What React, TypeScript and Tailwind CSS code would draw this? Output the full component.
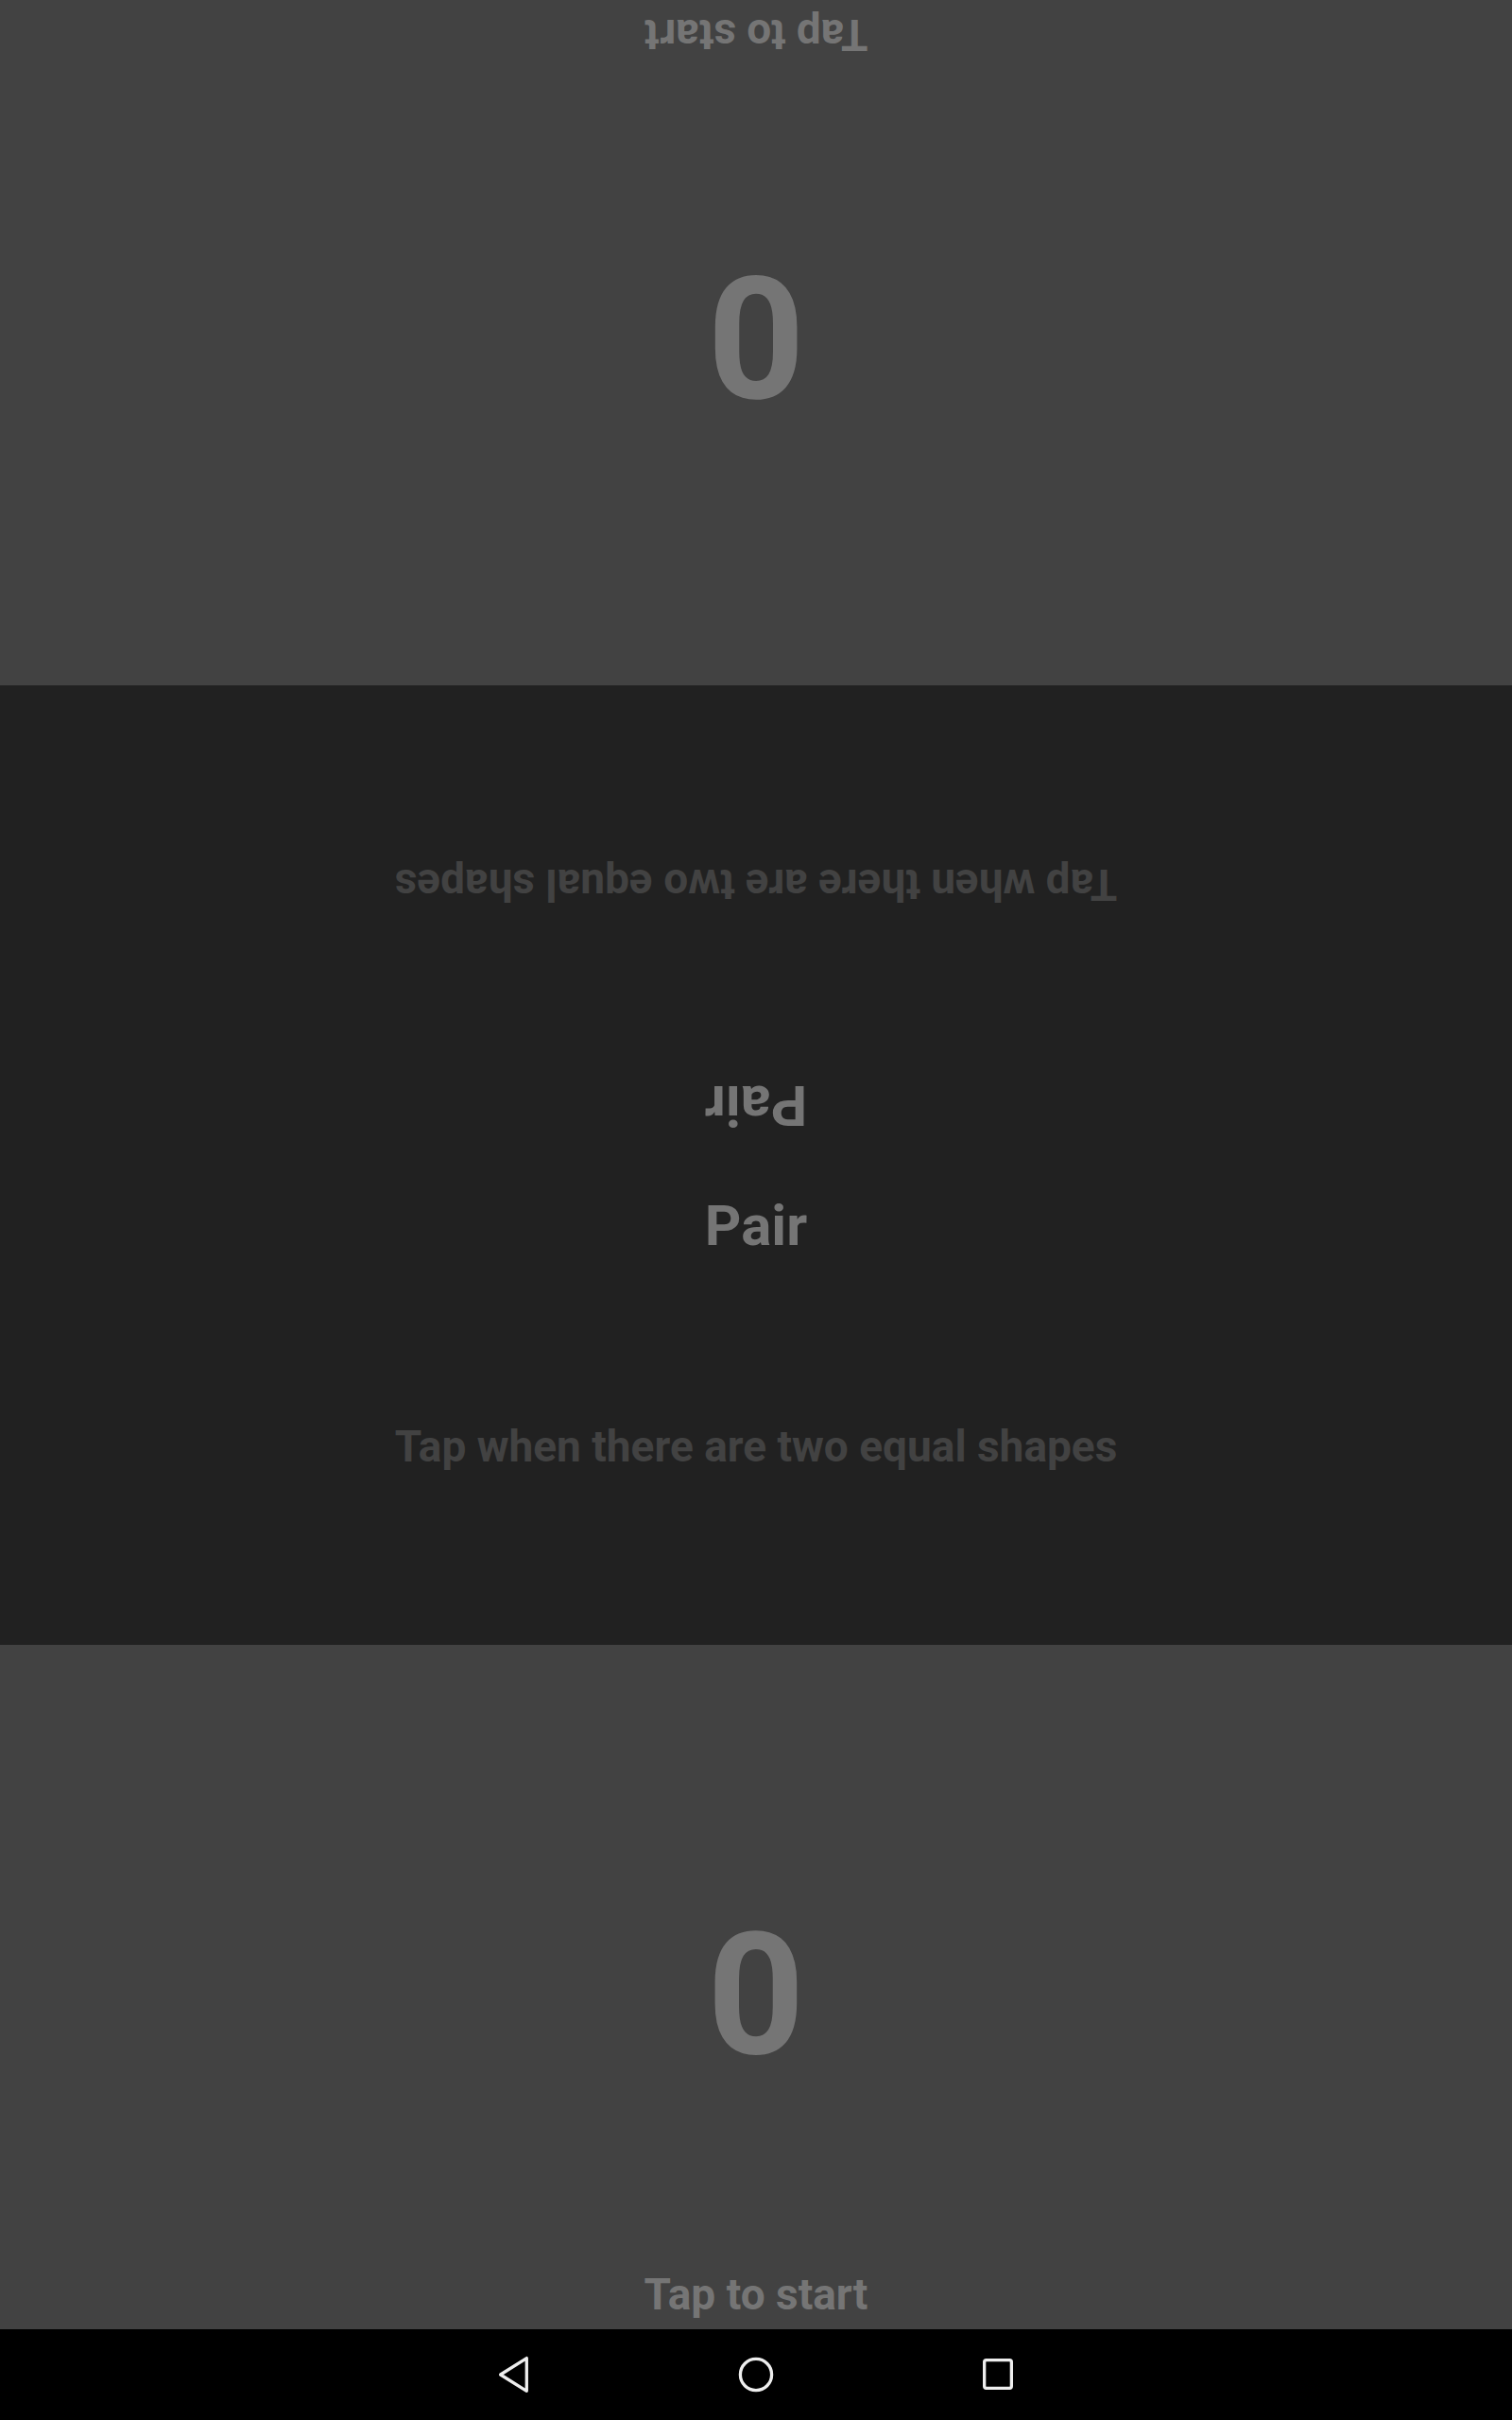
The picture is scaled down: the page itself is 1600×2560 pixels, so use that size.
function ScorePanel({ flipped, height }: { flipped?: boolean; height: string }) {
  return (
    <div
      className={`${height} bg-[#424242] flex flex-col items-center text-[#757575] font-bold ${
        flipped ? "rotate-180" : ""
      }`}
    >
      <div className="pt-[281px] text-[180px] leading-none">0</div>
      <div className="flex-1" />
      <div className="pb-[14px] text-[46px] leading-none">Tap to start</div>
    </div>
  );
}

function PairHalf({ flipped }: { flipped?: boolean }) {
  return (
    <div className={`flex-1 flex flex-col items-center font-bold ${flipped ? "rotate-180" : ""}`}>
      <div className="pt-[34px] text-[60px] leading-none text-[#757575]">Pair</div>
      <div className="mt-[180px] text-[46px] leading-none text-[#424242]">
        Tap when there are two equal shapes
      </div>
    </div>
  );
}

function NavBar() {
  return (
    <div className="h-[96px] bg-black flex items-center justify-center">
      <div className="w-[256px] flex justify-center">
        <svg width="40" height="40" viewBox="0 0 40 40" fill="none" stroke="#eeeeee" strokeWidth="3.3" strokeLinejoin="round">
          <path d="M5.6 20 L33.3 2.6 L33.3 37.3 Z" />
        </svg>
      </div>
      <div className="w-[256px] flex justify-center">
        <svg width="40" height="40" viewBox="0 0 40 40" fill="none" stroke="#eeeeee" strokeWidth="3.3">
          <circle cx="20" cy="20" r="16.6" />
        </svg>
      </div>
      <div className="w-[256px] flex justify-center">
        <svg width="40" height="40" viewBox="0 0 40 40" fill="none" stroke="#eeeeee" strokeWidth="3.3">
          <rect x="5.65" y="4.65" width="28.7" height="29.7" rx="2" />
        </svg>
      </div>
    </div>
  );
}

export default function App() {
  return (
    <div className="w-[1600px] h-[2560px] flex flex-col font-[Roboto,sans-serif] overflow-hidden">
      <ScorePanel flipped height="h-[725px]" />
      <div className="h-[1015px] bg-[#212121] flex flex-col">
        <PairHalf flipped />
        <PairHalf />
      </div>
      <ScorePanel height="h-[724px]" />
      <NavBar />
    </div>
  );
}
